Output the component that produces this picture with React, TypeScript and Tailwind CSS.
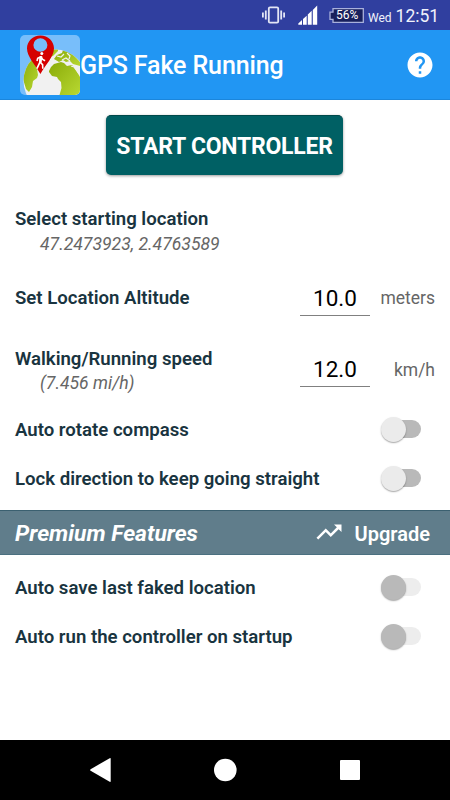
import { useState } from "react"

interface ToggleProps {
  label: string
  disabled?: boolean
}

function ToggleRow({ label, disabled = false }: ToggleProps) {
  const [on, setOn] = useState(false)

  return (
    <div className="flex h-[49px] items-center justify-between pl-[15px] pr-[29px]">
      <span className="whitespace-nowrap pt-px text-[18.6px] font-semibold leading-6 text-[#193440]">{label}</span>
      <button
        role="switch"
        aria-checked={on}
        disabled={disabled}
        onClick={() => setOn(!on)}
        className={`-mt-px flex h-[18px] w-[36px] items-center rounded-full ${disabled ? "bg-[#ededed]" : "bg-[#b9b9b9]"}`}
      >
        <span
          className={`size-[25px] shrink-0 rounded-full shadow-[0_1px_1.5px_rgba(0,0,0,0.35)] ${on ? "ml-[15px]" : "-ml-[4px]"} ${disabled ? "bg-[#b9b9b9]" : "bg-[#ebebeb]"}`}
        ></span>
      </button>
    </div>
  )
}

function StatusBar() {
  return (
    <div className="flex h-[30px] items-center bg-[#303f9f] pl-[261px] text-white">
      <svg width="25" height="20" viewBox="0 0 25 20" fill="none" stroke="#e3e6f5" strokeWidth="1.8">
        <rect x="7.8" y="2.3" width="9.4" height="15.4" rx="1.2" />
        <path d="M4.8 5.5v9M1.9 7.5v5M20.2 5.5v9M23.1 7.5v5" />
      </svg>
      <svg className="ml-[12px]" width="20" height="20" viewBox="0 0 20 20" fill="#fff">
        <path d="M.3 19.7v-1.2l3.7-3.4v4.6zM5 19.7v-5.6l3.7-3.4v9zM9.8 19.7V9.6l3.9-3.8v13.9zM14.8 19.7V4.9L19.2.6v19.1z" />
      </svg>
      <div className="relative ml-[11px] h-[15px] w-[35px]">
        <svg className="absolute inset-0" width="35" height="15" viewBox="0 0 35 15">
          <path d="M4 .7h30.3v13.6H4v-3H1V4.2h3z" fill="#18205c" stroke="#a9b1dc" strokeWidth="1.3" />
        </svg>
        <span className="absolute inset-y-0 left-[7px] text-[12px] leading-[15px]">56%</span>
      </div>
      <span className="ml-[4px] mt-[5px] text-[12px] text-[#f0f2fb]">Wed</span>
      <span className="ml-[4px] mt-[2px] text-[17.5px] text-[#f0f2fb]">12:51</span>
    </div>
  )
}

function Logo() {
  return (
    <svg width="60" height="60" viewBox="0 0 60 60">
      <defs>
        <clipPath id="tile">
          <rect width="60" height="60" rx="5" />
        </clipPath>
        <clipPath id="globe">
          <circle cx="35" cy="46" r="31.5" />
        </clipPath>
        <linearGradient id="land" x1="0" y1="0" x2="1" y2="1">
          <stop offset="0" stopColor="#8aab08" />
          <stop offset="1" stopColor="#b8d832" />
        </linearGradient>
      </defs>
      <g clipPath="url(#tile)">
        <rect width="60" height="60" fill="#78befa" />
        <circle cx="35" cy="46" r="31.5" fill="#f1f1f1" />
        {/* continents */}
        <g clipPath="url(#globe)">
          <path d="M3 22h9l5 12 1 6-1 3-4 3-1 6-3 5-3-3-3-10z" fill="url(#land)" />
          <path d="M26 10h12v6l-5 5-9 3z" fill="url(#land)" />
          <path d="M29 36l2-4 3-3 7-2 3 1 3 3 5-1 4 5 4 7v18H39.5l2-7-.5-6-3-3-1-2-5-1-3-4z" fill="url(#land)" />
          <path d="M34 24l3-4 5-2 1-3 8 2 9 10v4l-7-2-3-3-4 1-3-2-4 2z" fill="url(#land)" />
          <path d="M37 21l4 1 3-3M42 25l4-2 4 3M47 18l3 3-1 3M51 31l3 1 5 7" fill="none" stroke="#f1f1f1" strokeWidth="1.2" />
        </g>
        <circle cx="20.4" cy="10" r="7.5" fill="#78befa" />
        <path
          d="M20.4.4C12.8.4 7 6.2 7 13.3c0 8.5 8 16 13.4 25.7C25.8 29.3 34 21.8 34 13.3 34 6.2 28.2.4 20.4.4zm0 2.8a7 6.8 0 1 1 0 13.6 7 6.8 0 0 1 0-13.6z"
          fill="#d50000"
          fillRule="evenodd"
        />
        {/* walker */}
        <circle cx="21.8" cy="18.6" r="1.5" fill="#fff" />
        <path d="M20.7 21.5l-1 6.2-2.8 6M20 27l2.6 2.7.2 4M17 26l.7-2.8 3.2-1.5 1.8 2.8 2.4 1.2" fill="none" stroke="#fff" strokeWidth="1.6" />
        <path d="M19.7 21.2h2.6l-.6 6.4h-2.6z" fill="#fff" />
      </g>
    </svg>
  )
}

export default function App() {
  const [altitude, setAltitude] = useState("10.0")
  const [speed, setSpeed] = useState("12.0")

  return (
    <div className="flex h-[800px] w-[450px] flex-col overflow-hidden bg-white font-['Roboto',sans-serif]">
      <StatusBar />

      <header className="flex h-[70px] items-center border-b border-[#1b86dc] bg-[#2196f3] pl-5 pr-[15px] text-white">
        <Logo />
        <h1 className="pt-[3px] text-[25px] font-medium tracking-[-0.12px]">GPS Fake Running</h1>
        <svg className="ml-auto" width="30" height="30" viewBox="0 0 24 24" fill="#fff">
          <path d="M12 2C6.48 2 2 6.48 2 12s4.48 10 10 10 10-4.48 10-10S17.52 2 12 2zm1 17h-2v-2h2v2zm2.07-7.75l-.9.92C13.45 12.9 13 13.5 13 15h-2v-.5c0-1.1.45-2.1 1.17-2.83l1.24-1.26c.37-.36.59-.86.59-1.41 0-1.1-.9-2-2-2s-2 .9-2 2H8c0-2.21 1.79-4 4-4s4 1.79 4 4c0 .88-.36 1.68-.93 2.25z" />
        </svg>
      </header>

      <main className="flex flex-col">
        <button className="mr-px mt-[15px] h-[60px] w-[237px] self-center rounded-[5px] border-t border-[#00494b] bg-[#006064] pt-[3px] text-[23px] font-bold tracking-[-0.25px] text-white shadow-[0_1px_3px_rgba(0,0,0,0.4)]">
          START CONTROLLER
        </button>

        <section className="mt-[32px] flex h-[51px] flex-col px-[15px]">
          <span className="text-[18.6px] font-semibold leading-[25px] text-[#193440]">Select starting location</span>
          <span className="pl-[25px] text-[17.6px] italic leading-[25px] text-[#666]">47.2473923, 2.4763589</span>
        </section>

        <section className="mt-[22px] flex h-[36px] items-center px-[15px]">
          <span className="pt-[2px] text-[18.6px] font-semibold text-[#193440]">Set Location Altitude</span>
          <input
            className="ml-auto h-[36px] w-[70px] border-b border-[#808080] text-center text-[22.5px] text-black outline-none"
            value={altitude}
            onChange={(e) => setAltitude(e.target.value)}
          />
          <span className="w-[65px] text-right text-[17.5px] text-[#666]">meters</span>
        </section>

        <section className="mt-[29px] flex h-[52px] px-[15px]">
          <div className="flex flex-col pt-[2px]">
            <span className="text-[18.6px] font-semibold leading-[25px] text-[#193440]">Walking/Running speed</span>
            <span className="-mt-px pl-[25px] text-[17.6px] italic leading-[25px] text-[#666]">(7.456 mi/h)</span>
          </div>
          <input
            className="ml-auto mt-[6px] h-[36px] w-[70px] border-b border-[#808080] text-center text-[22.5px] text-black outline-none"
            value={speed}
            onChange={(e) => setSpeed(e.target.value)}
          />
          <span className="mt-[12px] w-[65px] text-right text-[17.5px] text-[#666]">km/h</span>
        </section>

        <section className="mt-[8px] flex flex-col">
          <ToggleRow label="Auto rotate compass" />
          <ToggleRow label="Lock direction to keep going straight" />
        </section>

        <section className="mt-[7px] flex h-[45px] items-center border-y border-t-[#3b6070] border-b-[#4b7080] bg-[#607d8b] pl-[15px] pr-5 text-white">
          <h2 className="pt-[3px] text-[22.8px] font-bold italic">Premium Features</h2>
          <svg className="-mt-px ml-auto" width="30" height="30" viewBox="0 0 24 24" fill="#fff">
            <path d="M16 6l2.29 2.29-4.88 4.88-4-4L2 16.59 3.41 18l6-6 4 4 6.3-6.29L22 12V6z" />
          </svg>
          <span className="ml-[11px] pt-[2px] text-[20px] font-semibold">Upgrade</span>
        </section>

        <section className="mt-[8px] flex flex-col">
          <ToggleRow label="Auto save last faked location" disabled />
          <ToggleRow label="Auto run the controller on startup" disabled />
        </section>
      </main>

      <nav className="mt-auto flex h-[60px] items-center bg-black px-[90px]">
        <svg width="270" height="24" viewBox="0 0 270 24" fill="#fff">
          <path d="M.6 11.2L19.7.2q1-.5 1 .6v22.4q0 1-1 .6L.6 12.8q-1-.8 0-1.6z" />
          <circle cx="135.3" cy="12" r="11.3" />
          <rect x="250" y="2" width="20" height="20" rx="1" />
        </svg>
      </nav>
    </div>
  )
}
